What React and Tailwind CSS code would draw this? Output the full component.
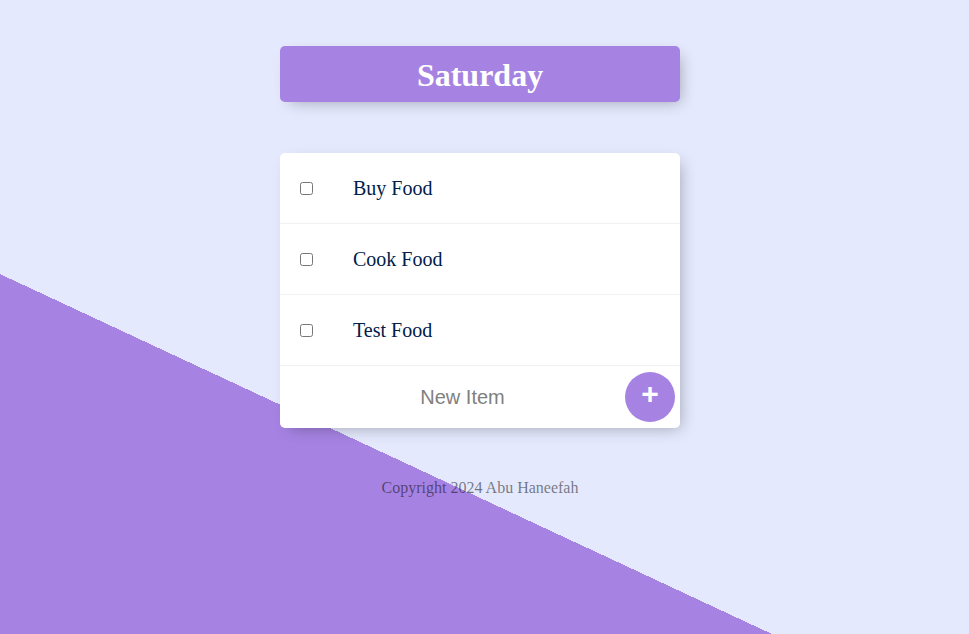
import React, { useState } from 'react';

const initialItems = ['Buy Food', 'Cook Food', 'Test Food'];

export default function App() {
  const [items, setItems] = useState(initialItems);
  const [text, setText] = useState('');

  const addItem = (e) => {
    e.preventDefault();
    if (!text.trim()) return;
    setItems([...items, text]);
    setText('');
  };

  return (
    <div className="min-h-[1000px] w-full bg-[#E4E9FD] bg-[linear-gradient(25deg,#A683E3_50%,#E4E9FD_50%)] font-['Liberation_Serif',serif]">
      <div className="w-[960px] pt-[46px]">
        {/* Heading */}
        <div className="mx-auto w-[400px] h-[56px] rounded-[5px] bg-[#A683E3] flex items-center justify-center shadow-[5px_5px_15px_-5px_rgba(0,0,0,0.3)]">
          <h1 className="text-[32px] font-bold text-white leading-none pt-[2px]">Saturday</h1>
        </div>

        {/* List */}
        <div className="mx-auto mt-[51px] w-[400px] rounded-[5px] bg-white shadow-[5px_5px_15px_-5px_rgba(0,0,0,0.3)]">
          {items.map((item) => (
            <div key={item} className="flex items-center min-h-[71px] border-b border-[#F1F1F1]">
              <input type="checkbox" className="peer m-5 w-[13px] h-[13px]" />
              <p className="px-5 text-[20px] text-[#00204a] peer-checked:line-through peer-checked:decoration-[#A683E3]">
                {item}
              </p>
            </div>
          ))}
          <form onSubmit={addItem} className="flex items-center h-[62px] pl-[26px]">
            <input
              type="text"
              value={text}
              onChange={(e) => setText(e.target.value)}
              placeholder="New Item"
              autoComplete="off"
              className="w-[313px] h-[60px] text-center text-[20px] font-['Liberation_Sans',sans-serif] text-[#00204a] placeholder:text-[#808080] outline-none focus:shadow-[inset_0_-3px_0_0_#A683E3]"
            />
            <button
              type="submit"
              className="ml-[6px] w-[50px] h-[50px] rounded-full bg-[#A683E3] text-white text-[30px] font-bold leading-none pb-[6px] font-['Liberation_Sans',sans-serif] flex items-center justify-center"
            >
              +
            </button>
          </form>
        </div>

        {/* Footer */}
        <footer className="mt-[48px] text-center text-[16px] text-black/50">
          Copyright 2024 Abu Haneefah
        </footer>
      </div>
    </div>
  );
}
